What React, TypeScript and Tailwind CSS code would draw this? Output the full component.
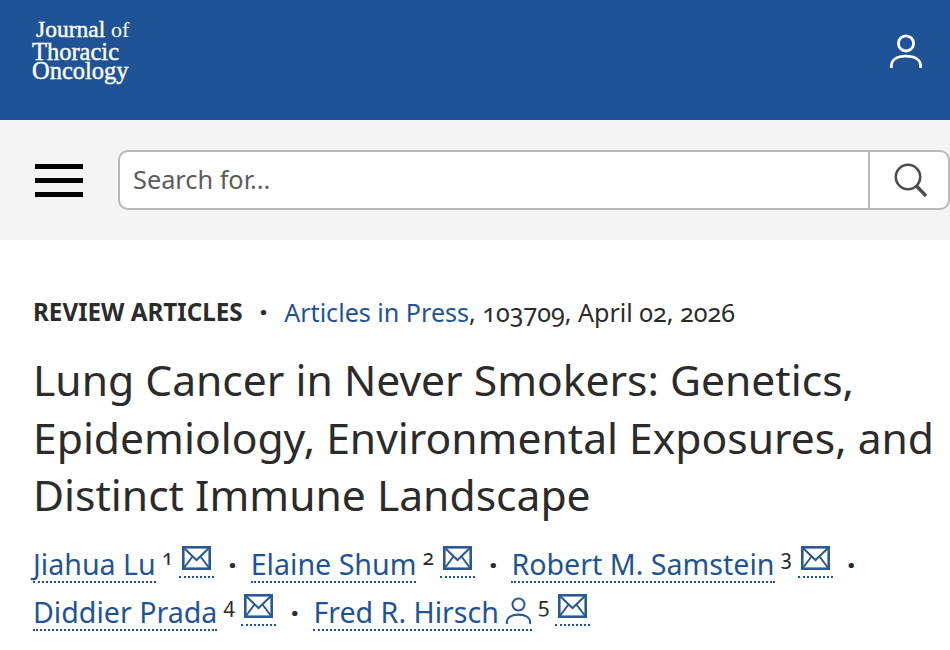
const sans = "font-['Noto_Sans','Lato',sans-serif]";

const Dot = ({ className = "" }: { className?: string }) => (
  <span className={`text-[#2b2b2b] font-black text-[26px] leading-none ${className}`}>·</span>
);

const MailIcon = () => (
  <span className="inline-flex flex-col border-b-2 border-dotted border-[#1f5396] h-[33px] w-[35px] items-center -translate-y-[3px]">
    <svg width="29" height="24" viewBox="0 0 29 24" fill="none" stroke="#2a5a92" strokeWidth="2.6" className="mt-[1px]">
      <rect x="1.3" y="1.3" width="26.4" height="21.4" />
      <path d="M1.5 1.5 L14.5 14 L27.5 1.5 M1.5 22.5 L10.5 10.5 M27.5 22.5 L18.5 10.5" strokeWidth="2" />
    </svg>
  </span>
);

const UserIcon = ({ size, color, stroke }: { size: number; color: string; stroke: number }) => (
  <svg width={size} height={size} viewBox="0 0 34 36" fill="none" stroke={color} strokeWidth={stroke}>
    <circle cx="17" cy="10" r="8" />
    <path d="M1.5 36 V34 C1.5 27 8 23.5 17 23.5 C26 23.5 32.5 27 32.5 34 V36" />
  </svg>
);

const Author = ({ name, sup, flagged }: { name: string; sup: string; flagged?: boolean }) => (
  <span className="inline-flex items-center">
    <span className="inline-flex items-center text-[#1f5396] border-b-2 border-dotted border-[#1f5396] leading-[34px] h-[36px]">
      {name}
      {flagged && (
        <span className="ml-[6px] -translate-y-[1px]">
          <UserIcon size={27} color="#2a5a92" stroke={2.7} />
        </span>
      )}
    </span>
    <span className="text-[21px] leading-none text-[#2b2b2b] ml-[6px] mr-[6px] -translate-y-[7px] oldstyle-nums">{sup}</span>
    <MailIcon />
  </span>
);

export default function App() {
  return (
    <div className={`w-[950px] h-[650px] overflow-hidden bg-white ${sans}`}>
      <header className="h-[120px] bg-[#1f5396] flex justify-between items-start pl-[32px] pr-[27px]">
        <div className="pt-[18px] font-['Liberation_Serif',serif] text-white text-[24.5px] [-webkit-text-stroke:0.4px_white]">
          <div className="pl-[4px] text-[23.5px] leading-[22px]">
            Journal <span className="text-[22px] [-webkit-text-stroke:0]">of</span>
          </div>
          <div className="leading-[19px] mt-[1px]">Thoracic</div>
          <div className="leading-[20px]">Oncology</div>
        </div>
        <div className="pt-[34px]">
          <UserIcon size={34} color="#ffffff" stroke={3} />
        </div>
      </header>

      <div className="h-[120px] bg-[#f4f4f4] flex items-center pl-[35px]">
        <div className="w-[48px] flex flex-col gap-[9px]">
          <div className="h-[5px] bg-black"></div>
          <div className="h-[5px] bg-black"></div>
          <div className="h-[5px] bg-black"></div>
        </div>
        <div className="ml-[35px] w-[832px] h-[60px] bg-white border-2 border-[#b9b9b9] rounded-[10px] flex items-center">
          <div className="flex-1 pl-[13px] text-[25.3px] text-[#5c5c5c]">Search for...</div>
          <div className="w-[80px] h-full border-l-2 border-[#b9b9b9] flex items-center pl-[24px]">
            <svg width="33" height="34" viewBox="0 0 33 34" fill="none" stroke="#4d4d4d" strokeWidth="2.6">
              <circle cx="14" cy="14" r="12.2" />
              <path d="M22.5 23 L32 33" strokeWidth="3.4" />
            </svg>
          </div>
        </div>
      </div>

      <main className="px-[33px] pt-[54px]">
        <div className="flex items-center text-[25.1px] leading-[36px] text-[#2b2b2b]">
          <span className="font-bold text-[24.2px]">REVIEW ARTICLES</span>
          <Dot className="mx-[17px]" />
          <span className="text-[#1f5396]">Articles in Press</span>
          <span className="oldstyle-nums">, 103709, April 02, 2026</span>
        </div>
        <h1 className="mt-[21px] text-[42.6px] leading-[57.5px] text-[#2b2b2b] whitespace-nowrap">
          Lung Cancer in Never Smokers: Genetics,
          <br />
          Epidemiology, Environmental Exposures, and
          <br />
          Distinct Immune Landscape
        </h1>
        <div className="mt-[23px] text-[28.6px] flex flex-col gap-[12px]">
          <div className="flex items-center h-[36px]">
            <Author name="Jiahua Lu" sup="1" />
            <Dot className="mx-[14.5px]" />
            <Author name="Elaine Shum" sup="2" />
            <Dot className="mx-[14.5px]" />
            <Author name="Robert M. Samstein" sup="3" />
            <Dot className="ml-[14.5px]" />
          </div>
          <div className="flex items-center h-[36px]">
            <Author name="Diddier Prada" sup="4" />
            <Dot className="mx-[15px]" />
            <Author name="Fred R. Hirsch" sup="5" flagged />
          </div>
        </div>
      </main>
    </div>
  );
}
